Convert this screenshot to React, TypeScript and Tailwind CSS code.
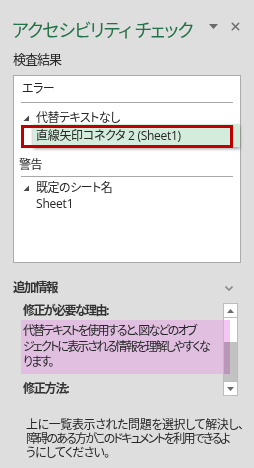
import { X } from "lucide-react";

const jp = "font-['Open_Sans','Noto_Sans_CJK_JP',sans-serif] [font-feature-settings:'palt']";

function Expander() {
  return (
    <svg width="7" height="7" viewBox="0 0 7 7" className="shrink-0">
      <polygon points="6,0.5 6,6 0.5,6" fill="#4a4a4a" />
    </svg>
  );
}

export default function App() {
  return (
    <div className={`w-[254px] h-[468px] bg-[#dedede] text-[#262626] overflow-hidden ${jp}`}>
      {/* header */}
      <div className="flex items-start justify-between pl-[12px] pr-[12px] pt-[16px]">
        <h1 className="text-[18px] leading-[28px] text-[#217346] tracking-[-0.9px] whitespace-nowrap">
          アクセシビリティ チェック
        </h1>
        <div className="flex items-center gap-[11px] pt-[4px]">
          <svg width="9" height="6" viewBox="0 0 9 6">
            <polygon points="0,0 9,0 4.5,5" fill="#6a6a6a" />
          </svg>
          <X size={13} strokeWidth={2.6} color="#6a6a6a" />
        </div>
      </div>

      <div className="pl-[13px] pt-[7px] text-[13px] leading-[16px] tracking-[-1px]">検査結果</div>

      {/* results list */}
      <div className="mx-[13px] mt-[8px] h-[188px] border border-[#ababab] bg-white pl-[7px] pr-[7px] text-[12px] tracking-[-0.5px]">
        <div className="flex h-[25px] items-center pl-[1px] pt-[1px] leading-[14px]">エラー</div>
        <div className="mt-[1px] h-px bg-[#a8a8a8]" />
        <div className="mt-[8px] flex h-[14px] items-center gap-[6px] pl-[2px] leading-[14px]">
          <Expander />
          <span>代替テキストなし</span>
        </div>
        <div className="relative -mr-[7px] mt-[-1px] h-[23px]">
          <div className="ml-[12px] h-[23px] bg-[#d3ecdc] pl-[3px] leading-[23px] tracking-[-0.3px] whitespace-nowrap shadow-[0_2px_3px_rgba(0,0,0,0.35)]">
            直線矢印コネクタ 2 (Sheet1)
          </div>
          <div className="absolute left-0 top-[1px] h-[23px] w-[212px] border-[3px] border-[#c00000]" />
        </div>
        <div className="-ml-[2px] mt-[11px] flex h-[14px] items-center leading-[14px]">警告</div>
        <div className="mt-[4px] h-px bg-[#a8a8a8]" />
        <div className="mt-[4px] flex h-[14px] items-center gap-[6px] pl-[2px] leading-[14px]">
          <Expander />
          <span>既定のシート名</span>
        </div>
        <div className="mt-[2px] flex h-[14px] items-center pl-[15px] leading-[14px] tracking-[-0.2px]">Sheet1</div>
      </div>

      {/* additional info */}
      <div className="flex items-center justify-between pl-[13px] pr-[21px] pt-[17px]">
        <span className="text-[12.5px] font-bold leading-[16px] tracking-[-1.5px] text-[#333]">追加情報</span>
        <svg width="8" height="5" viewBox="0 0 8 5">
          <polyline points="0.5,0.5 4,4 7.5,0.5" fill="none" stroke="#8a8a8a" strokeWidth="1.6" />
        </svg>
      </div>

      <div className="ml-[21px] mr-[16px] mt-[7px] flex h-[93px]">
        <div className="flex-1">
          <div className="flex h-[16px] items-center pl-[2px] text-[12px] font-bold leading-[16px] tracking-[-1.6px] text-[#333]">
            修正が必要な理由:
          </div>
          <div className="mt-[1px] h-[54px] bg-[#e0bfe0] pl-[2px] pt-[3px] text-[12px] leading-[15.5px] tracking-[-1.8px] whitespace-nowrap">
            代替テキストを使用すると、図などのオブ
            <br />
            ジェクトに表示される情報を理解しやすくな
            <br />
            ります。
          </div>
          <div className="mt-[7px] flex h-[16px] items-center pl-[2px] text-[12px] font-bold leading-[16px] tracking-[-1.2px] text-[#333]">
            修正方法:
          </div>
        </div>
        {/* scrollbar */}
        <div className="relative flex w-[15px] flex-col border border-[#bdbdbd] bg-[#c2c2c2]">
          <div className="flex h-[14px] items-center justify-center border-b border-[#bdbdbd] bg-white">
            <svg width="7" height="4" viewBox="0 0 7 4">
              <polygon points="0,4 7,4 3.5,0" fill="#6a6a6a" />
            </svg>
          </div>
          <div className="h-[24px] bg-white" />
          <div className="flex-1" />
          <div className="flex h-[14px] items-center justify-center border-t border-[#bdbdbd] bg-white">
            <svg width="7" height="4" viewBox="0 0 7 4">
              <polygon points="0,0 7,0 3.5,4" fill="#6a6a6a" />
            </svg>
          </div>
          <div className="absolute left-0 top-[16px] h-[54px] w-[6px] bg-[#e070e0] opacity-40 mix-blend-multiply" />
        </div>
      </div>

      <p className="pl-[26px] pr-[10px] pt-[22px] text-[12px] leading-[14px] whitespace-nowrap">
        <span className="block tracking-[-0.4px]">上に一覧表示された問題を選択して解決し、</span>
        <span className="block tracking-[-1.8px]">障碍のある方がこのドキュメントを利用できるよ</span>
        <span className="block tracking-[-0.8px]">うにしてください。</span>
      </p>
    </div>
  );
}
